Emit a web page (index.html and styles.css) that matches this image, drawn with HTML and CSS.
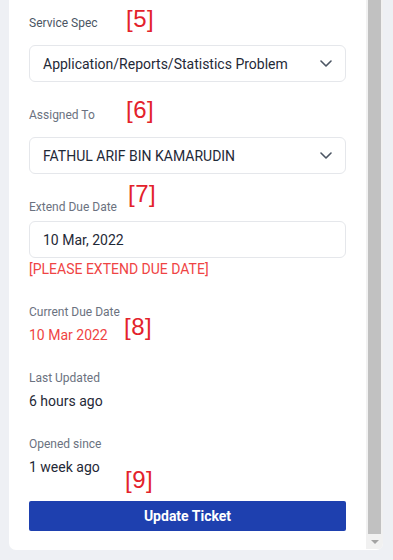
FILE: index.html
```html
<!DOCTYPE html>
<html lang="en">
<head>
    <meta charset="UTF-8">
    <meta name="viewport" content="width=device-width, initial-scale=1.0">
    <title>Update Ticket</title>
    <link rel="stylesheet" href="styles.css">
</head>
<body>
    <div class="card">
        <div class="content">
            <div class="field field-select">
                <label class="label label-dark">Service Spec</label>
                <span class="marker marker-5">[5]</span>
                <div class="select-box">
                    <span>Application/Reports/Statistics Problem</span>
                    <svg class="chevron" width="12" height="7" viewBox="0 0 12 7"><path d="M1 1l5 5 5-5" fill="none" stroke="#4b5563" stroke-width="1.6" stroke-linecap="round" stroke-linejoin="round"/></svg>
                </div>
            </div>

            <div class="field field-select">
                <label class="label">Assigned To</label>
                <span class="marker marker-6">[6]</span>
                <div class="select-box">
                    <span>FATHUL ARIF BIN KAMARUDIN</span>
                    <svg class="chevron" width="12" height="7" viewBox="0 0 12 7"><path d="M1 1l5 5 5-5" fill="none" stroke="#4b5563" stroke-width="1.6" stroke-linecap="round" stroke-linejoin="round"/></svg>
                </div>
            </div>

            <div class="field field-date">
                <label class="label" for="due">Extend Due Date</label>
                <span class="marker marker-7">[7]</span>
                <input id="due" class="text-input" type="text" value="10 Mar, 2022">
                <div class="error">[PLEASE EXTEND DUE DATE]</div>
            </div>

            <div class="field">
                <div class="label">Current Due Date</div>
                <span class="marker marker-8">[8]</span>
                <div class="value value-red">10 Mar 2022</div>
            </div>

            <div class="field">
                <div class="label">Last Updated</div>
                <div class="value">6 hours ago</div>
            </div>

            <div class="field field-last">
                <div class="label">Opened since</div>
                <div class="value">1 week ago</div>
                <span class="marker marker-9">[9]</span>
            </div>

            <button class="submit-btn">Update Ticket</button>
        </div>

        <div class="scrollbar">
            <div class="thumb"></div>
            <div class="arrow"></div>
        </div>
    </div>
</body>
</html>
```

FILE: styles.css
```css
body {
    margin: 0;
    background: #eef0f4;
    font-family: Roboto, "Liberation Sans", sans-serif;
}
.card {
    display: flex;
    height: 550px;
    margin: 0 10px 0 9px;
    background: white;
    border-radius: 0 0 7px 7px;
    overflow: hidden;
}
.content {
    flex: 1;
    padding: 15px 20px 0 20px;
}
.field {
    position: relative;
    margin-bottom: 25px;
}
.field-date {
    margin-bottom: 26px;
}
.field-last {
    margin-bottom: 24px;
}
.label {
    display: block;
    font-size: 12px;
    line-height: 16px;
    color: #6b7280;
    margin-bottom: 6px;
}
.label-dark {
    color: #4b5563;
}
.field-select .label {
    margin-bottom: 14px;
}
.select-box {
    display: flex;
    align-items: center;
    justify-content: space-between;
    height: 35px;
    padding: 0 13px 0 13px;
    border: 1px solid #e5e7eb;
    border-radius: 6px;
    font-size: 14px;
    color: #1f2937;
}
.text-input {
    display: block;
    box-sizing: border-box;
    width: 100%;
    height: 37px;
    margin: 0;
    padding: 0 13px;
    border: 1px solid #e5e7eb;
    border-radius: 6px;
    font-family: Roboto, "Liberation Sans", sans-serif;
    font-size: 14px;
    color: #1f2937;
    outline: none;
}
.error {
    margin-top: 2px;
    font-size: 14px;
    line-height: 18px;
    color: #ef4444;
}
.value {
    margin-top: -1px;
    font-size: 14px;
    line-height: 20px;
    color: #1f2937;
}
.value-red {
    color: #ef4444;
}
.marker {
    position: absolute;
    font-family: "Liberation Sans", sans-serif;
    font-size: 24px;
    line-height: 24px;
    letter-spacing: 0.5px;
    color: #e3222b;
}
.marker-5 { left: 97px; top: -8px; }
.marker-6 { left: 97px; top: -9px; }
.marker-7 { left: 99px; top: -17px; }
.marker-8 { left: 95px; top: 11px; }
.marker-9 { left: 96px; top: 32px; }
.submit-btn {
    display: block;
    width: 100%;
    height: 30px;
    padding: 0;
    border: none;
    border-radius: 2px;
    background: #1e40af;
    color: white;
    font-family: Roboto, "Liberation Sans", sans-serif;
    font-size: 14px;
    font-weight: bold;
    cursor: pointer;
}
.scrollbar {
    display: flex;
    flex-direction: column;
    width: 17px;
    height: 549px;
    background: #f1f1f1;
}
.thumb {
    flex: 1;
    margin: 0 2px;
    background: #c1c1c1;
}
.arrow {
    height: 15px;
    display: flex;
    align-items: center;
    justify-content: center;
}
.arrow::before {
    content: "";
    border-left: 4px solid transparent;
    border-right: 4px solid transparent;
    border-top: 4px solid #a3a3a3;
}
```
